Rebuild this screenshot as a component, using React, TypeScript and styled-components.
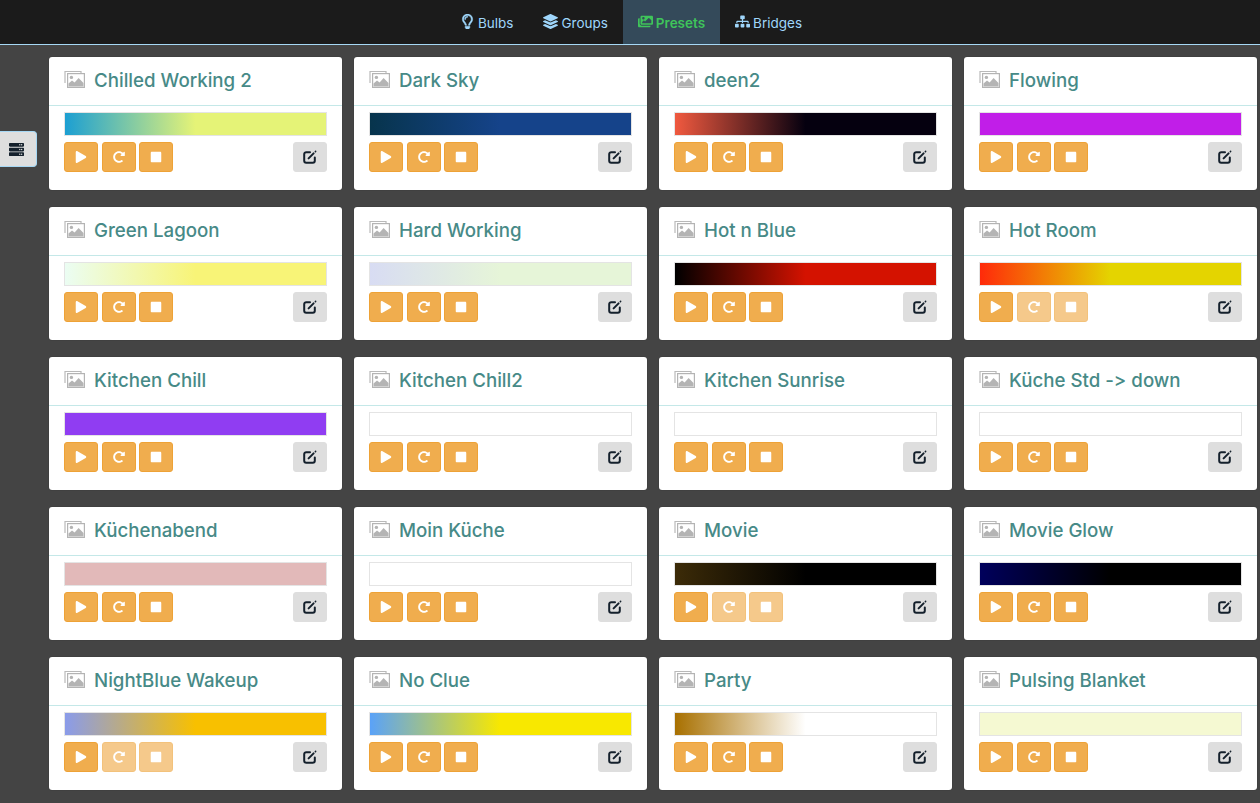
import React from "react";
import styled, { createGlobalStyle } from "styled-components";
import {
  FaRegLightbulb,
  FaLayerGroup,
  FaImages,
  FaSitemap,
  FaPlay,
  FaRedoAlt,
  FaStop,
  FaServer,
} from "react-icons/fa";

type Preset = {
  name: string;
  from: string;
  to?: string;
  locked?: boolean;
};

const presets: Preset[] = [
  { name: "Chilled Working 2", from: "#1c9fd2", to: "#e5f377" },
  { name: "Dark Sky", from: "#07344c", to: "#15438a" },
  { name: "deen2", from: "#f0593f", to: "#05000f" },
  { name: "Flowing", from: "#c11ee8" },
  { name: "Green Lagoon", from: "#ebfdf3", to: "#f8f477" },
  { name: "Hard Working", from: "#d8dcf3", to: "#e6f5d8" },
  { name: "Hot n Blue", from: "#000000", to: "#d41200" },
  { name: "Hot Room", from: "#ff2a0a", to: "#e4d400", locked: true },
  { name: "Kitchen Chill", from: "#903df2" },
  { name: "Kitchen Chill2", from: "#ffffff" },
  { name: "Kitchen Sunrise", from: "#ffffff" },
  { name: "Küche Std -> down", from: "#ffffff" },
  { name: "Küchenabend", from: "#e2b9b9" },
  { name: "Moin Küche", from: "#ffffff" },
  { name: "Movie", from: "#3c2b08", to: "#000000", locked: true },
  { name: "Movie Glow", from: "#00005c", to: "#000000" },
  { name: "NightBlue Wakeup", from: "#8a9bea", to: "#f8c000", locked: true },
  { name: "No Clue", from: "#5aa2f8", to: "#f8e800" },
  { name: "Party", from: "#a87000", to: "#ffffff" },
  { name: "Pulsing Blanket", from: "#f5f9d2" },
];

const BoldBulb = styled(FaRegLightbulb)`
  stroke: currentColor;
  stroke-width: 16;
`;

const tabs = [
  { label: "Bulbs", icon: <BoldBulb /> },
  { label: "Groups", icon: <FaLayerGroup /> },
  { label: "Presets", icon: <FaImages />, active: true },
  { label: "Bridges", icon: <FaSitemap /> },
];

const GlobalStyle = createGlobalStyle`
  html, body {
    margin: 0;
    height: 100%;
    overflow: hidden;
    background: #444444;
  }
  * {
    box-sizing: border-box;
  }
`;

const Page = styled.div`
  font-family: "Inter", "Liberation Sans", sans-serif;
  font-feature-settings: "calt" 0;
  height: 803px;
  background: #444444;
`;

const NavBar = styled.nav`
  height: 45px;
  background: #1b1b1b;
  border-bottom: 1px solid #a6d8f5;
  display: flex;
  justify-content: center;
  padding-left: 2px;
`;

const Tab = styled.a<{ $active?: boolean }>`
  display: flex;
  align-items: center;
  gap: 3px;
  padding: 2px 15px 0;
  font-size: 13.5px;
  color: ${(p) => (p.$active ? "#3fc45a" : "#9fd6fb")};
  background: ${(p) => (p.$active ? "#344a5a" : "transparent")};
  font-weight: ${(p) => (p.$active ? 600 : 400)};
  svg {
    font-size: 15px;
    margin-top: -3px;
  }
`;

const Body = styled.div`
  display: flex;
`;

const Side = styled.aside`
  width: 49px;
  flex: none;
  padding-top: 86px;
`;

const SideButton = styled.button`
  width: 37px;
  height: 36px;
  padding: 0 4px 0 0;
  display: flex;
  align-items: center;
  justify-content: center;
  background: #dedede;
  border: 1px solid #a6d8f5;
  border-left: none;
  border-radius: 0 4px 4px 0;
  color: #14202c;
  font-size: 15px;
`;

const Grid = styled.main`
  display: grid;
  grid-template-columns: repeat(4, 293px);
  column-gap: 12px;
  row-gap: 17px;
  padding-top: 12px;
`;

const Card = styled.section`
  height: 133px;
  background: #ffffff;
  border-radius: 3px;
  box-shadow: 0 0 1px rgba(0, 0, 0, 0.5);
`;

const CardHead = styled.header`
  height: 49px;
  padding: 0 15px 1px;
  display: flex;
  align-items: center;
  gap: 9px;
  border-bottom: 1px solid #c4e8e8;
`;

const HeadIcon = styled.svg`
  width: 21px;
  height: 18px;
  margin-top: -3px;
  flex: none;
`;

const Title = styled.h3`
  margin: 0;
  font-size: 18.7px;
  font-weight: 500;
  color: #478a87;
  white-space: nowrap;
`;

const CardBody = styled.div`
  padding: 6px 15px 0;
`;

const Swatch = styled.div`
  height: 24px;
  border: 1px solid #e4e4e4;
  margin-bottom: 6px;
`;

const Controls = styled.div`
  display: flex;
  gap: 3.6px;
`;

const IconButton = styled.button<{ $faded?: boolean }>`
  width: 34px;
  height: 30px;
  padding: 0;
  display: flex;
  align-items: center;
  justify-content: center;
  color: #ffffff;
  font-size: 12px;
  background: #f0ad4e;
  border: 1px solid #eea236;
  border-radius: 3px;
  opacity: ${(p) => (p.$faded ? 0.65 : 1)};
`;

const EditButton = styled(IconButton)`
  margin-left: auto;
  background: #dedede;
  border-color: #dedede;
`;

const EditIcon = styled.svg`
  width: 14px;
  height: 14px;
  fill: none;
  stroke: #14202c;
  stroke-linecap: round;
`;

// stacked pictures, the front one with a filled landscape
function PictureIcon() {
  return (
    <HeadIcon viewBox="0 0 21 18">
      <path d="M1 13V1.5h16V3" fill="none" stroke="#b9b9b9" strokeWidth="1.2" />
      <rect x="3.6" y="3.6" width="16.8" height="13.8" fill="#fff" stroke="#b4b4b4" strokeWidth="1.2" />
      <circle cx="7.4" cy="7.4" r="1.7" fill="#b4b4b4" />
      <path d="M4.5 16.5v-3l3.5-3 2.6 2 4-4.6 4.9 5.2v3.4z" fill="#b4b4b4" />
    </HeadIcon>
  );
}

function PenSquareIcon() {
  return (
    <EditIcon viewBox="0 0 14 14">
      <path d="M7 2.2H3.2a2 2 0 0 0-2 2v6.6a2 2 0 0 0 2 2h6.6a2 2 0 0 0 2-2V7.4" strokeWidth="2" />
      <path d="M5.6 8.4 10.6 3.4" strokeWidth="2" />
      <path d="M12.4 1.6 12.6 1.4" strokeWidth="1.6" />
    </EditIcon>
  );
}

function swatchBackground(p: Preset) {
  return p.to ? `linear-gradient(to right, ${p.from}, ${p.to} 50%)` : p.from;
}

function PresetCard({ preset }: { preset: Preset }) {
  return (
    <Card>
      <CardHead>
        <PictureIcon />
        <Title>{preset.name}</Title>
      </CardHead>
      <CardBody>
        <Swatch style={{ background: swatchBackground(preset) }} />
        <Controls>
          <IconButton>
            <FaPlay />
          </IconButton>
          <IconButton $faded={preset.locked}>
            <FaRedoAlt />
          </IconButton>
          <IconButton $faded={preset.locked}>
            <FaStop />
          </IconButton>
          <EditButton>
            <PenSquareIcon />
          </EditButton>
        </Controls>
      </CardBody>
    </Card>
  );
}

export default function App() {
  return (
    <Page>
      <GlobalStyle />
      <NavBar>
        {tabs.map((t) => (
          <Tab key={t.label} $active={t.active}>
            {t.icon}
            {t.label}
          </Tab>
        ))}
      </NavBar>
      <Body>
        <Side>
          <SideButton>
            <FaServer />
          </SideButton>
        </Side>
        <Grid>
          {presets.map((p) => (
            <PresetCard key={p.name} preset={p} />
          ))}
        </Grid>
      </Body>
    </Page>
  );
}
